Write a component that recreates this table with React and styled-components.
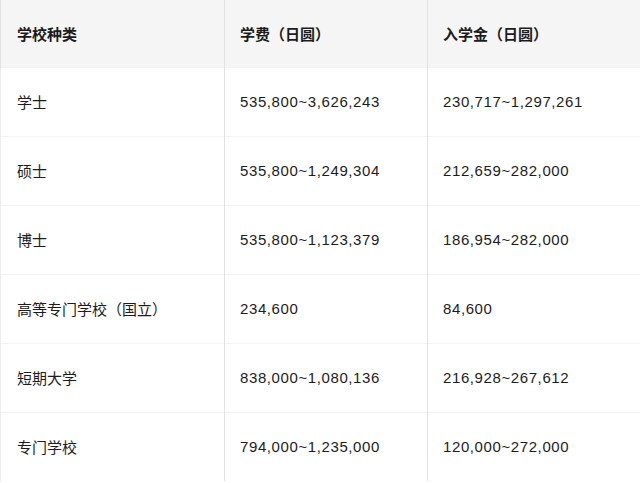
import React from 'react';
import styled, { createGlobalStyle } from 'styled-components';

const GlobalStyle = createGlobalStyle`
  html, body {
    margin: 0;
    padding: 0;
    background: #fff;
  }
  body {
    font-family: "Liberation Sans", "Noto Sans CJK SC", sans-serif;
    color: #1c1c1c;
  }
`;

const rows = [
  ['学士', '535,800~3,626,243', '230,717~1,297,261'],
  ['硕士', '535,800~1,249,304', '212,659~282,000'],
  ['博士', '535,800~1,123,379', '186,954~282,000'],
  ['高等专门学校（国立）', '234,600', '84,600'],
  ['短期大学', '838,000~1,080,136', '216,928~267,612'],
  ['专门学校', '794,000~1,235,000', '120,000~272,000'],
];

const Table = styled.table`
  width: 640px;
  border-collapse: collapse;
  table-layout: fixed;
  font-size: 15px;
`;

const Head = styled.th`
  height: 67px;
  padding: 0 16px 0 ${(p) => (p.$first ? '16px' : '15px')};
  text-align: left;
  font-weight: bold;
  background: #f5f5f5;
  border-left: 1px solid #e2e2e2;
  border-right: 1px solid #e2e2e2;
  box-sizing: border-box;
`;

const Cell = styled.td`
  height: 69px;
  padding: 0 16px 0 ${(p) => (p.$first ? '16px' : '15px')};
  border-left: 1px solid ${(p) => (p.$first ? '#ececec' : '#e2e2e2')};
  border-right: 1px solid #e2e2e2;
  border-top: 1px solid #f3f3f3;
  box-sizing: border-box;
  letter-spacing: ${(p) => (p.$first ? '0' : '0.6px')};
`;

export default function App() {
  return (
    <>
      <GlobalStyle />
      <Table>
        <colgroup>
          <col style={{ width: 224 }} />
          <col style={{ width: 203 }} />
          <col style={{ width: 213 }} />
        </colgroup>
        <thead>
          <tr>
            <Head $first>学校种类</Head>
            <Head>学费（日圆）</Head>
            <Head>入学金（日圆）</Head>
          </tr>
        </thead>
        <tbody>
          {rows.map((r) => (
            <tr key={r[0]}>
              <Cell $first>{r[0]}</Cell>
              <Cell>{r[1]}</Cell>
              <Cell>{r[2]}</Cell>
            </tr>
          ))}
        </tbody>
      </Table>
    </>
  );
}
